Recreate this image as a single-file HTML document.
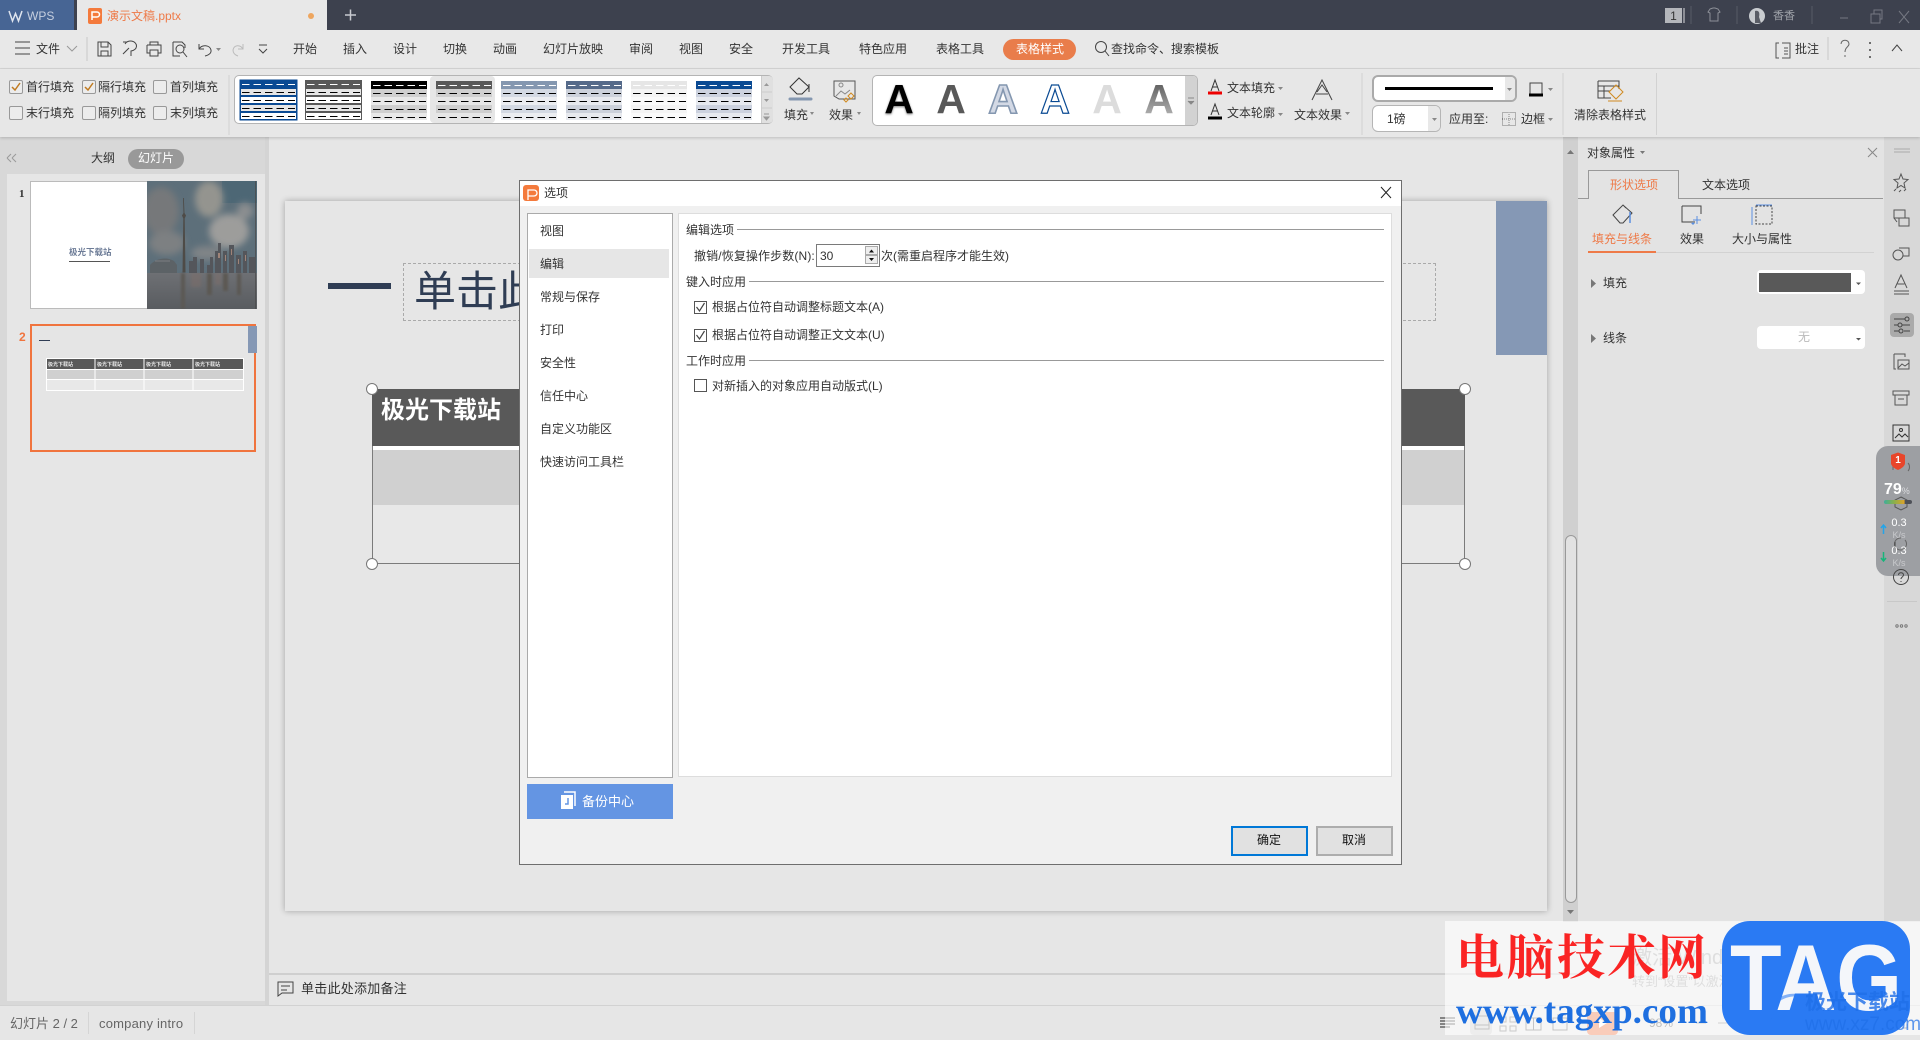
<!DOCTYPE html>
<html lang="zh"><head><meta charset="utf-8"><title>WPS</title>
<style>
html,body{margin:0;padding:0;width:1920px;height:1040px;overflow:hidden;background:#e6e6e6}
body{position:relative;font-family:"Liberation Sans","Noto Sans CJK SC",sans-serif;font-size:12px;color:#333}
.a{position:absolute}
.t{position:absolute;white-space:nowrap;line-height:14px;height:14px}
.c{transform:translateX(-50%)}
svg{position:absolute;overflow:visible}
.cb{position:absolute;width:12px;height:12px;border:1px solid #999;border-radius:2px;background:#ececec}
.dcb{position:absolute;width:11px;height:11px;border:1px solid #555;background:#fff}
.A{position:absolute;top:79px;font:bold 41px/41px "Liberation Sans",sans-serif;transform:translateX(-50%)}
</style></head><body>

<!-- title bar -->
<div class="a" style="left:0;top:0;width:1920px;height:30px;background:#3d414e"></div>
<div class="a" style="left:0;top:0;width:74px;height:30px;background:#476594"></div>
<div class="t" style="left:27px;top:9px;color:#c6cfdf">WPS</div>
<div class="a" style="left:77px;top:0;width:250px;height:30px;background:#e8e8e8"></div>
<div class="a" style="left:88px;top:8px;width:14px;height:16px;background:#f47a3c;border-radius:2px"></div>
<div class="t" style="left:107px;top:9px;color:#ee7a48">演示文稿.pptx</div>
<div class="a" style="left:308px;top:13px;width:6px;height:6px;border-radius:3px;background:#eea65f"></div>
<div class="t" style="left:1773px;top:9px;font-size:11px;color:#a0a3aa">香香</div>
<div class="a" style="left:1665px;top:8px;width:17px;height:15px;background:#b4b6bb"></div>
<div class="t c" style="left:1673.500px;top:9px;color:#333;font-size:12px">1</div>

<!-- menu row -->
<div class="a" style="left:0;top:30px;width:1920px;height:38px;background:#e8e8e8;border-bottom:1px solid #d6d6d6"></div>
<div class="t" style="left:36px;top:42px">文件</div>
<div class="t c" style="left:305px;top:42px">开始</div>
<div class="t c" style="left:355px;top:42px">插入</div>
<div class="t c" style="left:405px;top:42px">设计</div>
<div class="t c" style="left:455px;top:42px">切换</div>
<div class="t c" style="left:505px;top:42px">动画</div>
<div class="t c" style="left:573px;top:42px">幻灯片放映</div>
<div class="t c" style="left:641px;top:42px">审阅</div>
<div class="t c" style="left:691px;top:42px">视图</div>
<div class="t c" style="left:741px;top:42px">安全</div>
<div class="t c" style="left:806px;top:42px">开发工具</div>
<div class="t c" style="left:883px;top:42px">特色应用</div>
<div class="t c" style="left:960px;top:42px">表格工具</div>
<div class="a" style="left:1003px;top:39px;width:73px;height:21px;border-radius:11px;background:#e97d4b"></div>
<div class="t c" style="left:1040px;top:42px;color:#fff">表格样式</div>
<div class="t" style="left:1111px;top:42px">查找命令、搜索模板</div>
<div class="t" style="left:1795px;top:42px">批注</div>

<!-- ribbon -->
<div class="a" style="left:0;top:69px;width:1920px;height:68px;background:#e7e7e7;box-shadow:0 1px 3px rgba(0,0,0,.18);z-index:3"></div>
<div style="position:absolute;left:0;top:0;z-index:4">
<div class="cb" style="left:9px;top:80px"></div><div class="t" style="left:26px;top:80px">首行填充</div>
<div class="cb" style="left:82px;top:80px"></div><div class="t" style="left:98px;top:80px">隔行填充</div>
<div class="cb" style="left:153px;top:80px"></div><div class="t" style="left:170px;top:80px">首列填充</div>
<div class="cb" style="left:9px;top:106px"></div><div class="t" style="left:26px;top:106px">末行填充</div>
<div class="cb" style="left:82px;top:106px"></div><div class="t" style="left:98px;top:106px">隔列填充</div>
<div class="cb" style="left:153px;top:106px"></div><div class="t" style="left:170px;top:106px">末列填充</div>

<!-- gallery -->
<div class="a" style="left:234px;top:75px;width:537px;height:47px;background:#fff;border:1px solid #b4b4b4;border-radius:5px"></div>
<div class="a" style="left:761px;top:76px;width:11px;height:47px;background:#e0e0e0;border-left:1px solid #ccc;border-radius:0 4px 4px 0"></div>
<div class="a" style="left:430px;top:76px;width:65px;height:47px;background:#e6e6e6;border-radius:4px"></div>

<svg width="0" height="0" style="left:0;top:0"><defs>
<g id="L"><g stroke="#000" stroke-width="1" stroke-dasharray="7.500 4"><line x1="2" x2="55" y1="12.500" y2="12.500"/><line x1="2" x2="55" y1="20.500" y2="20.500"/><line x1="2" x2="55" y1="28.500" y2="28.500"/><line x1="2" x2="55" y1="36.500" y2="36.500"/></g><line x1="2" x2="55" y1="4.500" y2="4.500" stroke="#fff" stroke-dasharray="7.500 4"/></g>
</defs></svg>

<svg style="left:240px;top:80px" width="57" height="40"><rect width="57" height="40" fill="#fff" stroke="#0a4a93" stroke-width="1"/><rect width="57" height="8" fill="#0a4a93"/><rect x=".5" y="8.500" width="56" height="7" fill="#e6e6e6" stroke="#0a4a93"/><rect x=".5" y="16.500" width="56" height="7" fill="#fff" stroke="#0a4a93"/><rect x=".5" y="24.500" width="56" height="7" fill="#e6e6e6" stroke="#0a4a93"/><rect x=".5" y="32.500" width="56" height="7" fill="#fff" stroke="#0a4a93"/><use href="#L"/></svg>
<svg style="left:305px;top:80px" width="57" height="40"><rect width="57" height="40" fill="#fff"/><rect width="57" height="8" fill="#595959"/><rect x=".5" y="8.500" width="56" height="7" fill="#e6e6e6" stroke="#595959"/><rect x=".5" y="16.500" width="56" height="7" fill="#fff" stroke="#595959"/><rect x=".5" y="24.500" width="56" height="7" fill="#e6e6e6" stroke="#595959"/><rect x=".5" y="32.500" width="56" height="7" fill="#fff" stroke="#595959"/><use href="#L"/></svg>
<svg style="left:371px;top:81px" width="57" height="40"><rect width="56" height="8" fill="#000"/><rect y="8" width="56" height="8" fill="#cfcfcf"/><rect y="16" width="56" height="8" fill="#e8e8e8"/><rect y="24" width="56" height="8" fill="#cfcfcf"/><rect y="32" width="56" height="7" fill="#e8e8e8"/><use href="#L"/></svg>
<svg style="left:436px;top:81px" width="57" height="40"><rect width="56" height="8" fill="#595959"/><rect y="8" width="56" height="8" fill="#cfcfcf"/><rect y="16" width="56" height="8" fill="#e6e6e6"/><rect y="24" width="56" height="8" fill="#cfcfcf"/><rect y="32" width="56" height="7" fill="#e6e6e6"/><use href="#L"/></svg>
<svg style="left:501px;top:81px" width="57" height="40"><rect width="56" height="8" fill="#8497b0"/><rect y="8" width="56" height="8" fill="#d3d9e3"/><rect y="16" width="56" height="8" fill="#ebedf1"/><rect y="24" width="56" height="8" fill="#d3d9e3"/><rect y="32" width="56" height="7" fill="#ebedf1"/><use href="#L"/></svg>
<svg style="left:566px;top:81px" width="57" height="40"><rect width="56" height="8" fill="#556a8a"/><rect y="8" width="56" height="8" fill="#ccd1db"/><rect y="16" width="56" height="8" fill="#e7e9ee"/><rect y="24" width="56" height="8" fill="#ccd1db"/><rect y="32" width="56" height="7" fill="#e7e9ee"/><use href="#L"/></svg>
<svg style="left:631px;top:81px" width="57" height="40"><rect width="56" height="8" fill="#e6e6e6"/><rect y="8" width="56" height="8" fill="#f4f4f4"/><rect y="16" width="56" height="8" fill="#fafafa"/><rect y="24" width="56" height="8" fill="#f4f4f4"/><rect y="32" width="56" height="7" fill="#fafafa"/><use href="#L"/></svg>
<svg style="left:696px;top:81px" width="57" height="40"><rect width="56" height="8" fill="#0a4a93"/><rect y="8" width="56" height="8" fill="#ccd2df"/><rect y="16" width="56" height="8" fill="#e6e9ef"/><rect y="24" width="56" height="8" fill="#ccd2df"/><rect y="32" width="56" height="7" fill="#e6e9ef"/><use href="#L"/></svg>

<div class="t" style="left:784px;top:108px">填充</div>
<div class="t" style="left:829px;top:108px">效果</div>

<!-- text styles -->
<div class="a" style="left:872px;top:75px;width:324px;height:49px;background:#fff;border:1px solid #b4b4b4;border-radius:5px"></div>
<div class="a" style="left:1185px;top:76px;width:12px;height:49px;background:#d2d2d2;border-radius:0 4px 4px 0"></div>
<div class="A" style="left:899px;color:#000;text-shadow:0 1px 2px rgba(0,0,0,.5)">A</div>
<div class="A" style="left:951px;color:#595959">A</div>
<div class="A" style="left:1003px;color:#d3d9e5;-webkit-text-stroke:1.600px #8497b0">A</div>
<div class="A" style="left:1055px;color:#fff;-webkit-text-stroke:1.200px #0a4a93">A</div>
<div class="A" style="left:1107px;color:#dcdcdc">A</div>
<div class="A" style="left:1159px;background:linear-gradient(#555,#bbb);-webkit-background-clip:text;background-clip:text;color:transparent">A</div>

<div class="t" style="left:1227px;top:81px">文本填充</div>
<div class="t" style="left:1227px;top:106px">文本轮廓</div>
<div class="t" style="left:1294px;top:108px">文本效果</div>

<div class="a" style="left:1372px;top:75px;width:141px;height:23px;background:#fff;border:2px solid #aaa;border-radius:6px"></div>
<div class="a" style="left:1505px;top:77px;width:10px;height:23px;background:#e8e8e8;border-radius:0 4px 4px 0"></div>
<div class="a" style="left:1385px;top:87px;width:108px;height:3px;background:#000"></div>
<div class="a" style="left:1372px;top:105px;width:67px;height:25px;background:#fff;border:1px solid #b5b5b5;border-radius:6px"></div>
<div class="a" style="left:1428px;top:106px;width:12px;height:25px;background:#e8e8e8;border-radius:0 5px 5px 0"></div>
<div class="t" style="left:1387px;top:112px">1磅</div>
<div class="t" style="left:1449px;top:112px">应用至:</div>
<div class="t" style="left:1521px;top:112px">边框</div>
<div class="t" style="left:1574px;top:108px">清除表格样式</div>
</div>

<!-- ribbon + menu icons -->
<svg style="left:0;top:0;z-index:5" width="1920" height="1040" fill="none" stroke="#444" stroke-width="1">
<!-- title bar icons -->
<path d="M9 11l3.500 10 3-7.500 3 7.500L22 11" stroke="#dfe5ef" stroke-width="1.500"/>
<path d="M92 20V12h5a2.500 2.500 0 0 1 0 5h-5" stroke="#fff" stroke-width="1.500"/>
<path d="M345 15h11M350.500 9.500v11" stroke="#c8cad0" stroke-width="1.500"/>
<path d="M1684 8v15" stroke="#8c8e96" stroke-width="2"/>
<path d="M1691 6v18M1737 6v18M1812 6v18" stroke="#565a66"/>
<path d="M1710 9l3-1h2l3 1 2 3-2 1v8h-8v-8l-2-1z" stroke="#8d9098"/>
<circle cx="1757" cy="16" r="8" fill="#c9ccd0" stroke="none"/><path d="M1755 11c4-1 5 2 4 6l2 6h-6z" fill="#5a5d66" stroke="none"/>
<path d="M1840 18h8" stroke="#757882"/><path d="M1871 14h9v9h-9zM1874 14v-4h8v9h-2" stroke="#757882"/><path d="M1899 11l10 12M1909 11l-10 12" stroke="#757882"/>

<!-- menu icons -->
<path d="M15 42h15M15 48h15M15 54h15"/><path d="M67 46l5 5 5-5" stroke="#999"/>
<path d="M87 37v24" stroke="#c8c8c8"/>
<path d="M98 42h10l3 3v11H98zM101 42v5h7v-5M101 56v-5h7v5"/>
<path d="M125 44a6 5 0 1 1 6 7v5M123 54l6-6M123 42h4"/>
<path d="M150 45v-3h8v3M147 45h14v8h-3M150 53h-3v-8M150 50h8v6h-8z"/>
<path d="M173 42h9l3 3v3M173 42v14h7"/><circle cx="180" cy="49" r="4"/><path d="M183 52l4 5"/>
<path d="M199 44v5h5M199 49c3-5 11-4 12 1 .5 3-2 5-6 6"/><path d="M216 48h5l-2.500 3z" fill="#888" stroke="none"/>
<path d="M243 44v5h-5M243 49c-3-5-9-4-10 1 0 3 2 5 5 6" stroke="#bbb"/>
<path d="M259 45h8M259 49l4 4 4-4"/>
<!-- search / right -->
<circle cx="1101" cy="47" r="5.500"/><path d="M1105 51l4 5"/>
<path d="M1779 43h-3v15h3M1782 43h8v15h-8M1784 48h4M1784 51h4M1784 54h4" stroke="#555"/>
<path d="M1828 37v23" stroke="#c8c8c8"/>
<path d="M1841 44c0-5 8-5 8 0 0 3-4 3-4 8M1845 55v2" stroke="#666"/>
<path d="M1870 42v2M1870 49v2M1870 56v2" stroke-width="1.500"/>
<path d="M1892 51l5-6 5 6"/>
<!-- dividers -->
<path d="M229 75v60M1362 73v62M1563 73v62M1656.500 73v62" stroke="#d2d2d2"/>
<!-- checks -->
<path d="M12 87l3 3 5-7M85 87l3 3 5-7" stroke="#c07a20" stroke-width="1.500"/>
<!-- gallery scroll -->
<path d="M761 92h11M761 108h11" stroke="#ccc"/>
<path d="M764 86l2.500-3 2.500 3zM764 99l2.500 3 2.500-3z" fill="#999" stroke="none"/><path d="M764 114h5M764 117l2.500 3 2.500-3z" fill="#999" stroke="#999"/>
<path d="M1188 98h6M1188 101l3 3 3-3" fill="#888" stroke="#888"/>
<!-- fill / effect -->
<path d="M790 87l9-9 10 9-7 7h-5zM809 84v8" stroke-width="1" stroke="#333"/>
<path d="M790 99h21" stroke="#8497b0" stroke-width="3" stroke-linecap="round"/>
<path d="M834 81h21v18h-16l-5-3z" stroke="#555"/><circle cx="841" cy="85" r="2" stroke="#888"/><path d="M836 96l5-5 4 3 5-4" stroke="#888"/>
<path d="M851 93l3 3-3 3-3-3zM846 98l2 2-2 2-2-2z" stroke="#d08a20"/>
<path d="M810 112h4l-2 3zM857 112h4l-2 3z" fill="#888" stroke="none"/>
<!-- text fill/outline -->
<path d="M1211 91l4-11 4 11M1212.500 87h5" stroke="#333"/><path d="M1208 93h14" stroke="#e00" stroke-width="3"/>
<path d="M1211 115l4-11 4 11M1212.500 111h5" stroke="#333"/><path d="M1208 118h14" stroke="#000" stroke-width="3"/>
<path d="M1278 87h5l-2.500 3zM1278 113h5l-2.500 3zM1345 112h5l-2.500 3z" fill="#888" stroke="none"/>
<path d="M1312 100l10-20 10 20M1317 92l5-7 5 7M1316 94h12" stroke-width="1"/>
<!-- border + apply -->
<path d="M1530 83h12v12h-12z"/><path d="M1529 95h14" stroke="#000" stroke-width="3"/>
<path d="M1548 88h5l-2.500 3zM1507 88h5l-2.500 3zM1432 118h5l-2.500 3zM1548 118h5l-2.500 3z" fill="#888" stroke="none"/>
<rect x="1502.500" y="112.500" width="13" height="13" stroke-dasharray="1 1" stroke="#777"/><path d="M1509 112v13M1502 119h13" stroke-dasharray="1 1" stroke="#888"/>
<!-- clear -->
<path d="M1598 81h21v8M1598 81v17h13M1598 86h21M1598 91h12M1604 86v12"/>
<path d="M1609 92l7-7 7 7-7 7zM1608 101h14" stroke="#d08a20"/>
</svg>

<!-- left panel -->
<div class="a" style="left:0;top:137px;width:268px;height:868px;background:#d8d8d8"></div>
<div class="a" style="left:7px;top:174px;width:258px;height:827px;background:#e6e6e6"></div>
<div class="t" style="left:91px;top:151px">大纲</div>
<div class="a" style="left:128px;top:149px;width:56px;height:20px;border-radius:10px;background:#999"></div>
<div class="t c" style="left:156px;top:151px;color:#fff">幻灯片</div>
<div class="t" style="left:19px;top:187px;font:bold 11px/14px 'Liberation Serif',serif">1</div>
<div class="t" style="left:19px;top:330px;font:bold 12px/14px 'Liberation Sans',sans-serif;color:#f0743e">2</div>

<!-- thumb 1 -->
<div class="a" style="left:30px;top:181px;width:226px;height:126px;background:#fff;border-top:1px solid #bbb;border-left:1px solid #bbb;border-bottom:1px solid #bbb"></div>
<div class="t" style="left:69px;top:245px;font-size:8.500px;font-weight:bold;color:#6d7c97">极光下载站</div>
<div class="a" style="left:69px;top:261px;width:41px;height:1px;background:#555"></div>
<svg style="left:147px;top:181px" width="110" height="128" viewBox="0 0 110 128">
<defs><filter id="b"><feGaussianBlur stdDeviation="3.500"/></filter><filter id="b2"><feGaussianBlur stdDeviation="1.200"/></filter><linearGradient id="w" x1="0" x2="0" y1="0" y2="1"><stop offset="0" stop-color="#6e7074"/><stop offset="1" stop-color="#595c60"/></linearGradient><clipPath id="cp"><rect width="110" height="128"/></clipPath></defs>
<g clip-path="url(#cp)">
<rect width="110" height="128" fill="#5d6f7a"/>
<rect x="75" width="35" height="22" fill="#4d6775"/>
<g filter="url(#b)"><ellipse cx="14" cy="30" rx="18" ry="24" fill="#76787a"/><ellipse cx="62" cy="18" rx="14" ry="18" fill="#94948f"/><ellipse cx="82" cy="50" rx="20" ry="17" fill="#9d9d9b"/><ellipse cx="20" cy="62" rx="18" ry="12" fill="#7d8082"/><ellipse cx="60" cy="72" rx="16" ry="7" fill="#808487"/><ellipse cx="98" cy="30" rx="8" ry="8" fill="#8b8e90"/></g>
<rect y="92" width="110" height="36" fill="url(#w)"/>
<g filter="url(#b2)"><path d="M34 92h4v36h-4zM60 92h5v22h-5zM76 92h5v18h-5zM90 92h4v22h-4z" fill="#5b5852"/><path d="M44 92h10v14H44zM68 92h6v12h-6z" fill="#806e68" opacity=".45"/></g>
<path d="M36 17h.800l.700 15 1.500 2.500-1.300 3 .800 54h-3l.800-54-1.300-3 1.500-2.500z" fill="#4e4b47"/>
<path d="M3 92V84c5-6 16-9 24-4l3 4v8z" fill="#5c6266"/><path d="M8 80h15" stroke="#7d7f82"/>
<path d="M42 92V80h4v-4h4v16zM53 92V78h4v14zM60 92V84h3v-8h3v16zM68 92V70h3v-8h3v30zM76 92V70h4v22zM82 92V64h5v28zM89 92V74h5v18zM96 92V70h4v22zM102 92V76h6v16z" fill="#54565b"/>
<path d="M71 72h2v5h-2zM78 74h1v6h-1zM84 68h1v6h-1zM91 78h1v5h-1zM98 74h1v6h-1z" fill="#a08478"/>
<path d="M108.500 0v128" stroke="#4a4a4a" stroke-width=".7"/>
</g></svg>

<!-- thumb 2 -->
<div class="a" style="left:30px;top:324px;width:222px;height:124px;background:#e5e5e5;border:2px solid #f0743e"></div>
<div class="a" style="left:248px;top:326px;width:9px;height:27px;background:#8598b5"></div>
<div class="a" style="left:39px;top:340px;width:11px;height:1px;background:#2f3d54"></div>
<svg style="left:46px;top:358px" width="198" height="33">
<rect width="197" height="32" x=".5" y=".5" fill="#e8e8e8" stroke="#fff"/>
<rect x="1" y="1" width="196" height="10" fill="#595959"/>
<rect x="1" y="12" width="196" height="9.500" fill="#d0d0d0"/>
<path d="M0 11.500h197M0 21.500h197M49 0v33M98 0v33M147 0v33" stroke="#fff"/>
<text x="2" y="8" font-size="5" font-weight="bold" fill="#e8e8e8" font-family="Noto Sans CJK SC,sans-serif">极光下载站</text>
<text x="51" y="8" font-size="5" font-weight="bold" fill="#e8e8e8" font-family="Noto Sans CJK SC,sans-serif">极光下载站</text>
<text x="100" y="8" font-size="5" font-weight="bold" fill="#e8e8e8" font-family="Noto Sans CJK SC,sans-serif">极光下载站</text>
<text x="149" y="8" font-size="5" font-weight="bold" fill="#e8e8e8" font-family="Noto Sans CJK SC,sans-serif">极光下载站</text>
</svg>

<!-- slide -->
<div class="a" style="left:285px;top:201px;width:1262px;height:710px;background:#e6e6e6;box-shadow:0 0 6px rgba(0,0,0,.3)"></div>
<div class="a" style="left:1496px;top:201px;width:51px;height:154px;background:#8598b5"></div>
<div class="a" style="left:328px;top:283px;width:63px;height:6px;background:#2f3d54"></div>
<div class="a" style="left:403px;top:263px;width:1031px;height:56px;border:1px dashed #aaa"></div>
<div class="t" style="left:414px;top:266px;height:56px;font-size:42px;line-height:52px;color:#2f3d54">单击此处添加标题</div>
<!-- table on slide -->
<div class="a" style="left:372px;top:389px;width:1093px;height:175px;background:#e8e8e8;border:1px solid #7b7b7b;box-sizing:border-box"></div>
<div class="a" style="left:372px;top:389px;width:1093px;height:57px;background:#595959"></div>
<div class="a" style="left:373px;top:450px;width:1091px;height:55px;background:#d0d0d0"></div>
<div class="a" style="left:373px;top:446px;width:1091px;height:4px;background:#fff"></div>
<div class="t" style="left:381px;top:396px;height:30px;font-size:24px;line-height:30px;font-weight:bold;color:#fff">极光下载站</div>
<svg style="left:0;top:0" width="1920" height="1040"><g fill="#fff" stroke="#777"><circle cx="372" cy="389" r="5.500"/><circle cx="1465" cy="389" r="5.500"/><circle cx="372" cy="564" r="5.500"/><circle cx="1465" cy="564" r="5.500"/></g></svg>

<!-- dialog -->
<div class="a" style="left:519px;top:180px;width:881px;height:683px;background:#f0f0f0;border:1px solid #6e6e6e"></div>
<div class="a" style="left:520px;top:181px;width:881px;height:25px;background:#fff"></div>
<div class="a" style="left:523px;top:185px;width:16px;height:16px;background:#f47a3c;border-radius:3px"></div>
<div class="t" style="left:544px;top:186px">选项</div>
<div class="a" style="left:527px;top:213px;width:144px;height:563px;background:#fff;border:1px solid #aaa"></div>
<div class="a" style="left:529px;top:249px;width:140px;height:29px;background:#e6e6e6"></div>
<div class="t" style="left:540px;top:224px">视图</div>
<div class="t" style="left:540px;top:257px">编辑</div>
<div class="t" style="left:540px;top:290px">常规与保存</div>
<div class="t" style="left:540px;top:323px">打印</div>
<div class="t" style="left:540px;top:356px">安全性</div>
<div class="t" style="left:540px;top:389px">信任中心</div>
<div class="t" style="left:540px;top:422px">自定义功能区</div>
<div class="t" style="left:540px;top:455px">快速访问工具栏</div>
<div class="a" style="left:678px;top:213px;width:712px;height:562px;background:#fff;border:1px solid #ddd"></div>

<div class="t" style="left:686px;top:223px">编辑选项</div>
<div class="a" style="left:737px;top:229px;width:647px;height:1px;background:#999"></div>
<div class="t" style="left:694px;top:249px;letter-spacing:.12px">撤销/恢复操作步数(N):</div>
<div class="a" style="left:816px;top:244px;width:62px;height:21px;background:#fff;border:1px solid #7a7a7a"></div>
<div class="t" style="left:820px;top:249px">30</div>
<div class="a" style="left:865px;top:246px;width:13px;height:9px;background:#eee;border:1px solid #aaa;box-sizing:border-box"></div>
<div class="a" style="left:865px;top:255px;width:13px;height:9px;background:#eee;border:1px solid #aaa;box-sizing:border-box"></div>
<div class="t" style="left:881px;top:249px">次(需重启程序才能生效)</div>
<div class="t" style="left:686px;top:275px">键入时应用</div>
<div class="a" style="left:749px;top:281px;width:635px;height:1px;background:#999"></div>
<div class="dcb" style="left:694px;top:301px"></div>
<div class="t" style="left:712px;top:300px">根据占位符自动调整标题文本(A)</div>
<div class="dcb" style="left:694px;top:329px"></div>
<div class="t" style="left:712px;top:328px">根据占位符自动调整正文文本(U)</div>
<div class="t" style="left:686px;top:354px">工作时应用</div>
<div class="a" style="left:749px;top:360px;width:635px;height:1px;background:#999"></div>
<div class="dcb" style="left:694px;top:379px"></div>
<div class="t" style="left:712px;top:379px">对新插入的对象应用自动版式(L)</div>

<div class="a" style="left:527px;top:784px;width:146px;height:35px;background:#6495e3"></div>
<div class="t" style="left:582px;top:795px;color:#fff;font-size:13px">备份中心</div>
<div class="a" style="left:1231px;top:826px;width:73px;height:26px;background:#e1e1e1;border:2px solid #0078d7"></div>
<div class="t c" style="left:1269px;top:833px;color:#111">确定</div>
<div class="a" style="left:1316px;top:826px;width:73px;height:26px;background:#e1e1e1;border:2px solid #adadad"></div>
<div class="t c" style="left:1354px;top:833px;color:#111">取消</div>
<svg style="left:0;top:0" width="1920" height="1040" fill="none">
<path d="M527 200v-10h6a3 3 0 0 1 0 6h-6" stroke="#fff" stroke-width="1.300" transform="translate(1 0)"/>
<path d="M1381 187l10 11M1391 187l-10 11" stroke="#222"/>
<path d="M869 252.500l2.500-3 2.500 3zM869 258l2.500 3 2.500-3z" fill="#111"/>
<path d="M696.500 307l3 4 5-8M696.500 335l3 4 5-8" stroke="#444" stroke-width="1.200"/>
<path d="M561 795h12v14h-12z" fill="#fff"/><path d="M564 792h11v14" stroke="#fff" stroke-width="1.500"/><path d="M568 798v6h-3" stroke="#6495e3" stroke-width="1.500"/>
</svg>

<!-- notes + status -->
<div class="a" style="left:269px;top:973px;width:1309px;height:2px;background:#cfcfcf"></div>
<div class="t" style="left:301px;top:982px;font-size:13px;letter-spacing:.25px">单击此处添加备注</div>
<div class="a" style="left:0;top:1005px;width:1920px;height:1px;background:#d2d2d2"></div>
<div class="a" style="left:265px;top:137px;width:4px;height:868px;background:#d4d4d4"></div>
<div class="t" style="left:10px;top:1017px;font-size:13px;color:#666">幻灯片 2 / 2</div>
<div class="t" style="left:99px;top:1017px;font-size:13px;color:#666;letter-spacing:.2px">company intro</div>

<svg style="left:0;top:0" width="1920" height="1040" fill="none" stroke="#444">
<path d="M278 982h15v11h-11l-4 3zM281 986h9M281 990h6"/>
<path d="M88.500 1012v22M194.500 1012v22" stroke="#d5d5d5"/>
<path d="M7 158l4-4M7 158l4 4M12 158l4-4M12 158l4 4" stroke="#999"/>
</svg>

<!-- scrollbar -->
<div class="a" style="left:1563px;top:137px;width:15px;height:785px;background:#d0d0d0"></div>
<div class="a" style="left:1565px;top:535px;width:10px;height:366px;background:#e2e2e2;border:1px solid #999;border-radius:6px"></div>
<svg style="left:0;top:0" width="1920" height="1040"><path d="M1567 154l3.500-4 3.500 4zM1567 910l3.500 4 3.500-4z" fill="#777"/></svg>

<!-- right panel -->
<div class="a" style="left:1578px;top:137px;width:306px;height:785px;background:#e3e3e3"></div>
<div class="a" style="left:1884px;top:137px;width:36px;height:785px;background:#d8d8d8"></div>
<div class="t" style="left:1587px;top:146px">对象属性</div>
<div class="a" style="left:1578px;top:198px;width:305px;height:1px;background:#999"></div>
<div class="a" style="left:1588px;top:170px;width:91px;height:29px;background:#e3e3e3;border:1px solid #999;border-bottom:none;box-sizing:border-box"></div>
<div class="t c" style="left:1634px;top:178px;color:#ee7a48">形状选项</div>
<div class="t c" style="left:1726px;top:178px">文本选项</div>
<div class="t c" style="left:1622px;top:232px;color:#ee7a48">填充与线条</div>
<div class="t c" style="left:1692px;top:232px">效果</div>
<div class="t c" style="left:1762px;top:232px">大小与属性</div>
<div class="a" style="left:1588px;top:252px;width:286px;height:1px;background:#d2d2d2"></div>
<div class="a" style="left:1588px;top:251px;width:68px;height:2px;background:#ee7a48"></div>
<div class="t" style="left:1603px;top:276px">填充</div>
<div class="a" style="left:1757px;top:270px;width:108px;height:24px;background:#fff;border-radius:4px"></div>
<div class="a" style="left:1759px;top:273px;width:92px;height:19px;background:#595959"></div>
<div class="t" style="left:1603px;top:331px">线条</div>
<div class="a" style="left:1757px;top:326px;width:108px;height:23px;background:#fff;border-radius:4px"></div>
<div class="t c" style="left:1804px;top:330px;color:#bbb">无</div>

<svg style="left:0;top:0" width="1920" height="1040" fill="none" stroke="#444">
<path d="M1640 151h5l-2.500 3z" fill="#777" stroke="none"/>
<path d="M1868 148l9 9M1877 148l-9 9" stroke="#888"/>
<path d="M1613 215l10-10 9 8-9 10h-3zM1623 205l3 3"/><path d="M1630 212v11" stroke="#5b8fe0" stroke-width="1.500"/>
<path d="M1682 206h19v8M1682 206v16h13"/><path d="M1697 216v8M1693 220h8" stroke="#5b8fe0"/><path d="M1693 222v3M1691.500 223.500h3" stroke="#5b8fe0"/>
<path d="M1756 206h16v18h-16z" stroke-dasharray="2 1.500"/><path d="M1752 207v18M1756 205h16" stroke="#5b8fe0"/>
<path d="M1591 279v9l5-4.500z" fill="#777" stroke="none"/><path d="M1591 334v9l5-4.500z" fill="#777" stroke="none"/>
<path d="M1856 282.500h5l-2.500 2.500zM1856 338h5l-2.500 2.500z" fill="#555" stroke="none"/>
<!-- sidebar -->
<path d="M1894 149h16M1894 152h16" stroke="#aaa"/>
<path d="M1901 174l2 5 5 .5-4 3.500 1 5-4-2.500-4 2.500 1-5-4-3.500 5-.5zM1896 189l-2 2M1901 190l-2 2M1906 189l-2 2" stroke="#555"/>
<path d="M1894 210h11v8h-11zM1899 218h10v8h-10zM1894 218l3 4" stroke="#555"/>
<circle cx="1898" cy="255" r="5" stroke="#555"/><path d="M1899 248h10v8h-6" stroke="#555"/>
<path d="M1895 288l6-13 6 13M1897.500 284h7M1894 291h15M1894 294h15" stroke="#555"/>
<rect x="1890" y="313" width="24" height="24" rx="4" fill="#aaa" stroke="none"/>
<path d="M1894 319h11M1894 325h4M1902 325h8M1894 331h5M1904 331h6" stroke="#444"/><circle cx="1907" cy="319" r="2"/><circle cx="1900" cy="325" r="2"/><circle cx="1901" cy="331" r="2"/>
<path d="M1894 354h11v3M1894 354v15h2M1898 360h11v9h-11zM1898 368l4-4 3 2 4-3" stroke="#555"/>
<path d="M1893 391h16v4h-16zM1895 395v10h12v-10M1898 399h6" stroke="#555"/>
<path d="M1893 425h16v16h-16zM1895 438l4-4 3 3 3-3 3 3" stroke="#333"/><circle cx="1901" cy="430" r="1.500" stroke="#333"/>
<path d="M1887 601.500h30" stroke="#c8c8c8"/>
<circle cx="1897" cy="626" r="1.200" stroke="#777"/><circle cx="1901.500" cy="626" r="1.200" stroke="#777"/><circle cx="1906" cy="626" r="1.200" stroke="#777"/>
</svg>

<!-- floating widget -->
<div class="a" style="left:1876px;top:446px;width:44px;height:130px;background:#9d9fa3;border-radius:12px 0 0 12px"></div>
<svg style="left:0;top:0" width="1920" height="1040" fill="none">
<path d="M1893 470v-8l4-3 2 1M1908 463c2 2 2 6 0 8" stroke="#666"/>
<path d="M1891 455l7-2.500 7 2.500v8c0 3-3.500 5.500-7 7-3.500-1.500-7-4-7-7z" fill="#e8452a"/>
<path d="M1901 497l6 3v7l-6 3-6-3v-7z" stroke="#555"/>
<path d="M1901 538a6 6 0 1 0 4 2" stroke="#666"/><path d="M1895 542v6" stroke="#444"/>
<path d="M1883.500 534v-9M1881 528l2.500-3 2.500 3" stroke="#25a4e8" stroke-width="1.500"/>
<path d="M1883.500 552v9M1881 558l2.500 3 2.500-3" stroke="#16b57a" stroke-width="1.500"/>
<circle cx="1901" cy="577" r="7.500" stroke="#444"/><path d="M1898.500 575c0-3 5-3 5 0 0 2-2.500 2-2.500 4M1901 581v1" stroke="#444"/>
</svg>
<div class="a" style="left:1884px;top:500px;width:28px;height:4px;border-radius:2px;background:linear-gradient(90deg,#3fae9a 0%,#88b04e 35%,#dba42a 72%,#4e5158 75%,#4e5158 100%)"></div>
<div class="t" style="left:1884px;top:483px;font-weight:bold;font-size:16px;color:#fff">79<span style="font-size:9px;font-weight:normal;color:#dcdde0">%</span></div>
<div class="t c" style="left:1899px;top:516px;font-size:11px;color:#fff">0.3</div>
<div class="t c" style="left:1899px;top:528px;font-size:9px;color:#c8c9cc">K/s</div>
<div class="t c" style="left:1899px;top:544px;font-size:11px;color:#fff">0.3</div>
<div class="t c" style="left:1899px;top:556px;font-size:9px;color:#c8c9cc">K/s</div>
<div class="t" style="left:1892px;top:454px;width:12px;text-align:center;font-weight:bold;font-size:10px;color:#fff">1</div>

<!-- status right icons (beneath watermark) -->
<div class="a" style="left:1470px;top:1010px;width:22px;height:25px;background:#cfcfcf;border-radius:4px"></div>
<div class="a" style="left:1587px;top:1012px;width:31px;height:23px;background:#ef7a4a;border-radius:4px"></div>
<svg style="left:0;top:0" width="1920" height="1040" fill="none" stroke="#444">
<path d="M1440 1018h15M1440 1021h15M1440 1024h15M1440 1027h10" stroke="#222"/>
<path d="M1475 1016h14v13h-14zM1475 1025h14" stroke="#666"/>
<path d="M1500 1017h6v5h-6zM1510 1017h6v5h-6zM1500 1026h6v5h-6zM1510 1026h6v5h-6z" stroke="#777"/>
<path d="M1526 1018h15v12h-15zM1533.500 1018v12" stroke="#666"/>
<path d="M1553 1018h14v12h-14zM1557 1015h9" stroke="#666"/>
<path d="M1599 1018v10l8-5z" fill="#fff" stroke="none"/>
<path d="M1696 1023h10M1718 1023h66M1796 1023h6" stroke="#888"/>
<circle cx="1784" cy="1023" r="5" stroke="#333" fill="#e6e6e6"/>
<path d="M1866 1023h10M1871 1018v10" stroke="#333"/>
<path d="M1893 1018h4M1893 1018v4M1903 1018h4M1907 1018v4M1893 1028h4M1893 1024v4M1903 1028h4M1907 1024v4" stroke="#555"/>
</svg>
<div class="t" style="left:1649px;top:1016px;font-size:12px;color:#555">98%</div>

<!-- faint activation text + watermark -->
<div class="t" style="left:1632px;top:947px;font-size:20px;line-height:22px;height:22px;color:#a8a8a8">激活 Windows</div>
<div class="t" style="left:1632px;top:975px;font-size:13px;color:#a8a8a8">转到“设置”以激活 Windows。</div>
<div class="a" style="left:1445px;top:921px;width:475px;height:114px;background:rgba(255,255,255,.62)"></div>
<svg style="left:0;top:0" width="1920" height="1040">
<rect x="1722" y="921" width="188" height="114" rx="28" fill="#2a7af3"/>
<text x="1730" y="1010" font-family="Liberation Sans,sans-serif" font-weight="bold" font-size="94" fill="#f4f6fa" textLength="172" lengthAdjust="spacingAndGlyphs">TAG</text>
<text x="1456" y="974" font-family="Noto Serif CJK SC,serif" font-weight="bold" font-size="48" fill="#fa2424" textLength="250" lengthAdjust="spacing">电脑技术网</text>
<text x="1456" y="1023" font-family="Liberation Serif,serif" font-weight="bold" font-size="36" fill="#1e6fe0" textLength="252" lengthAdjust="spacingAndGlyphs">www.tagxp.com</text>
<text x="1805" y="1009" font-family="Liberation Sans,Noto Sans CJK SC,sans-serif" font-weight="bold" font-size="21" fill="#1f6fe8" opacity=".8">极光下载站</text>
<text x="1805" y="1030" font-family="Liberation Sans,sans-serif" font-size="19" fill="#1f6fe8" opacity=".7">www.xz7.com</text>
<path d="M1770 1005c10-12 28-14 30-8-8-2-20 1-26 10-5 8 2 12 12 8-7 8-24 6-16-10z" fill="#2a7af3" opacity=".55"/>
</svg>
</body></html>
